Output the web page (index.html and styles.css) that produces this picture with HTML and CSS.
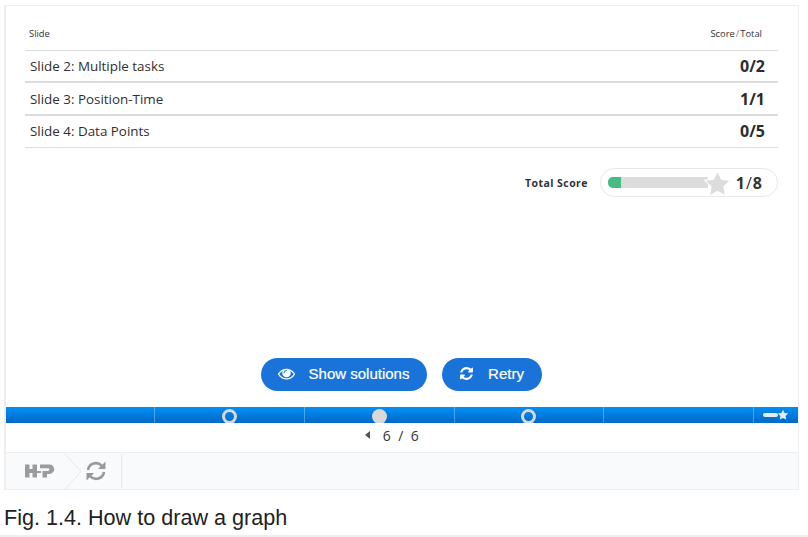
FILE: index.html
```html
<!DOCTYPE html>
<html lang="en">
<head>
<meta charset="utf-8">
<title>Fig. 1.4</title>
<link rel="stylesheet" href="styles.css">
</head>
<body>
<div class="frame">
  <main class="slide">
    <div class="table">
      <div class="row head"><span>Slide</span><span class="head-score">Score<i class="slash">/</i>Total</span></div>
      <div class="row task thick"><span>Slide 2: Multiple tasks</span><b>0/2</b></div>
      <div class="row task thick"><span>Slide 3: Position-Time</span><b>1/1</b></div>
      <div class="row task"><span>Slide 4: Data Points</span><b>0/5</b></div>
    </div>
    <div class="total">
      <span class="total-label">Total Score</span>
      <div class="pill">
        <div class="track"><div class="fill"></div></div>
        <svg class="big-star" viewBox="0 0 24 24"><path d="M12 .8l3.500 7.300 8 1.100-5.800 5.600 1.400 8L12 19l-7.100 3.800 1.400-8L.5 9.200l8-1.100z"/></svg>
        <span class="pill-score">1<i class="slash2">/</i>8</span>
      </div>
    </div>
    <div class="buttons">
      <button class="btn wide"><svg class="ico eye" viewBox="0 0 1792 1792"><path d="M1664 960q-152-236-381-353 61 104 61 225 0 185-131.5 316.5t-316.5 131.5-316.5-131.5-131.5-316.5q0-121 61-225-229 117-381 353 133 205 333.5 326.5t434.5 121.5 434.5-121.5 333.5-326.5zm-720-384q0-20-14-34t-34-14q-125 0-214.5 89.5t-89.5 214.5q0 20 14 34t34 14 34-14 14-34q0-86 61-147t147-61q20 0 34-14t14-34zm848 384q0 34-20 69-140 230-376.5 368.5t-499.5 138.5-499.5-139-376.5-368q-20-35-20-69t20-69q140-229 376.5-368t499.5-139 499.5 139 376.5 368q20 35 20 69z"/></svg>Show solutions</button>
      <button class="btn narrow"><svg class="ico" viewBox="0 0 1792 1792"><path d="M1639 1056q0 5-1 7-64 268-268 434.5t-478 166.5q-146 0-282.5-55t-243.5-157l-129 129q-19 19-45 19t-45-19-19-45v-448q0-26 19-45t45-19h448q26 0 45 19t19 45-19 45l-137 137q71 66 161 102t187 36q134 0 250-65t186-179q11-17 53-117 8-23 30-23h192q13 0 22.5 9.5t9.5 22.5zm25-800v448q0 26-19 45t-45 19h-448q-26 0-45-19t-19-45 19-45l138-138q-148-137-349-137-134 0-250 65t-186 179q-11 17-53 117-8 23-30 23h-199q-13 0-22.5-9.5t-9.5-22.5v-7q65-268 270-434.5t480-166.5q146 0 284 55.5t245 156.5l130-129q19-19 45-19t45 19 19 45z"/></svg>Retry</button>
    </div>
  </main>
  <div class="progress">
    <div class="cell"></div>
    <div class="cell"><span class="dot ring"></span></div>
    <div class="cell"><span class="dot solid"></span></div>
    <div class="cell"><span class="dot ring"></span></div>
    <div class="cell"></div>
    <div class="cell last">
      <svg class="mini" viewBox="0 0 26 12"><rect x="0" y="4" width="15" height="4" rx="2"/><path d="M20 .8l1.600 3.200 3.600.5-2.600 2.500.6 3.600-3.200-1.700-3.200 1.700.6-3.600-2.600-2.500 3.600-.5z"/></svg>
    </div>
  </div>
  <div class="pager">
    <span class="arrow"></span><span class="count">6 / 6</span>
  </div>
  <footer class="foot">
    <svg class="logo" viewBox="0 0 30 14"><path d="M0 .5h4.500v4.500h3V.5h4.500v13H7.500V9h-3v4.500H0z"/><rect x="12" y="7" width="4" height="2"/><path d="M15 .5h9.500a4.700 4.700 0 0 1 0 9.500H22v3.500h-4.500V7H23a1.300 1.300 0 0 0 0-2.800h-8z"/></svg>
    <svg class="chev" viewBox="0 0 18 37"><path d="M0 0l17 18.500L0 37"/></svg>
    <svg class="reload" viewBox="0 0 20 20"><path class="arc" d="M2 9A8 8 0 0 1 15.800 4.800M18 11A8 8 0 0 1 4.200 15.200"/><path class="tip" d="M19.500 .5v7.500h-7.500zM.5 19.500v-7.500h7.500z"/></svg>
    <span class="foot-sep"></span>
  </footer>
</div>
<p class="caption">Fig. 1.4. How to draw a graph</p>
<div class="strip"></div>
</body>
</html>
```
FILE: styles.css
```css
* { box-sizing: border-box; }
html, body { margin: 0; padding: 0; background: #fff; }
body { width: 808px; height: 537px; overflow: hidden; position: relative; font-family: "Open Sans", sans-serif; color: #333; }
.frame { margin: 5px 0 0 4px; width: 795px; height: 485px; border: 1px solid #eee; border-left-width: 2px; display: flex; flex-direction: column; }
.slide { height: 401px; padding: 0 20px 0 19px; display: flex; flex-direction: column; }
.table { display: flex; flex-direction: column; }
.row { display: flex; justify-content: space-between; align-items: center; padding: 0 13px 0 5px; border-bottom: 1px solid #ddd; }
.head { height: 45px; padding-top: 10px; padding-left: 4px; padding-right: 16px; font-size: 9.400px; color: #333; }
.slash { font-style: normal; color: #888; padding: 0 1px; }
.task { height: 32.400px; font-size: 13.400px; color: #2f2f2f; }
.task b { font-size: 16px; font-weight: 700; color: #2c2c2c; }
.thick { border-bottom-width: 2px; border-bottom-color: #dcdcdc; }
.total { display: flex; justify-content: flex-end; align-items: center; gap: 12px; margin-top: 20px; }
.total-label { font-size: 10.500px; font-weight: 700; letter-spacing: .45px; color: #333; }
.pill { position: relative; width: 178px; height: 29px; border: 1px solid #e8e8e8; border-radius: 15px; background: #fff; display: flex; align-items: center; padding: 0 15px 0 7px; justify-content: space-between; }
.track { width: 100px; height: 11px; background: #dcdcdc; border-radius: 5px 0 0 5px; overflow: hidden; }
.fill { width: 13px; height: 100%; background: #48bb85; }
.big-star { position: absolute; left: 103px; top: 1px; width: 27px; height: 27px; fill: #dcdcdc; stroke: #fff; stroke-width: 1; }
.pill-score { font-size: 16px; font-weight: 700; color: #333; }
.slash2 { font-style: normal; font-weight: 400; padding: 0 1px; }
.buttons { display: flex; justify-content: center; gap: 15px; margin-top: 161px; padding-right: 1px; }
.btn { height: 33px; border: 0; border-radius: 17px; background: #1a73d9; color: #fff; font: 15px "Liberation Sans", Arial, sans-serif; -webkit-text-stroke: .2px #fff; display: flex; align-items: center; justify-content: center; padding: 0 0 2px; }
.wide { width: 166px; }
.narrow { width: 100px; }
.ico { width: 15px; height: 15px; fill: #fff; margin-right: 14px; }
.eye { width: 17px; height: 17px; }
.progress { height: 16px; display: grid; grid-template-columns: 149px repeat(4, 149.750px) 1fr; background: linear-gradient(#0090f5, #0068c8); }
.cell { position: relative; overflow: hidden; border-right: 1px solid rgba(255,255,255,.3); display: flex; justify-content: center; align-items: center; }
.cell.last { border-right: 0; }
.dot { width: 15px; height: 15px; border-radius: 50%; margin-top: 3px; flex: none; }
.ring { border: 3px solid #d8d8d8; background: transparent; }
.solid { background: #d8d8d8; }
.mini { width: 26px; height: 12px; fill: #e8eaec; margin-top: -1px; }
.pager { height: 29px; display: flex; align-items: flex-start; justify-content: center; gap: 13px; padding: 3px 19px 0 0; font-size: 14px; color: #333; }
.arrow { width: 0; height: 0; margin-top: 5px; border: 4px solid transparent; border-right: 5px solid #555; border-left: 0; }
.count { letter-spacing: 1.400px; word-spacing: 1px; }
.foot { height: 37px; flex: 1; border-top: 1px solid #eee; background: #f9fafc; display: flex; align-items: center; }
.logo { width: 30px; height: 14px; margin-left: 19px; fill: #9c9c9c; }
.chev { width: 18px; height: 37px; margin-left: 9px; fill: none; stroke: #e8e8ea; stroke-width: 1; }
.reload { width: 20px; height: 20px; margin-left: 4px; }
.arc { fill: none; stroke: #999; stroke-width: 2.600; }
.tip { fill: #999; }
.foot-sep { width: 1px; height: 34px; margin-left: 15px; background: #e8e8ea; }
.caption { margin: 16px 0 0 4px; font: 21.600px/24px "Liberation Sans", Arial, sans-serif; color: #222; }
.strip { position: absolute; left: 0; right: 0; bottom: 0; height: 2px; background: #eee; }
```
